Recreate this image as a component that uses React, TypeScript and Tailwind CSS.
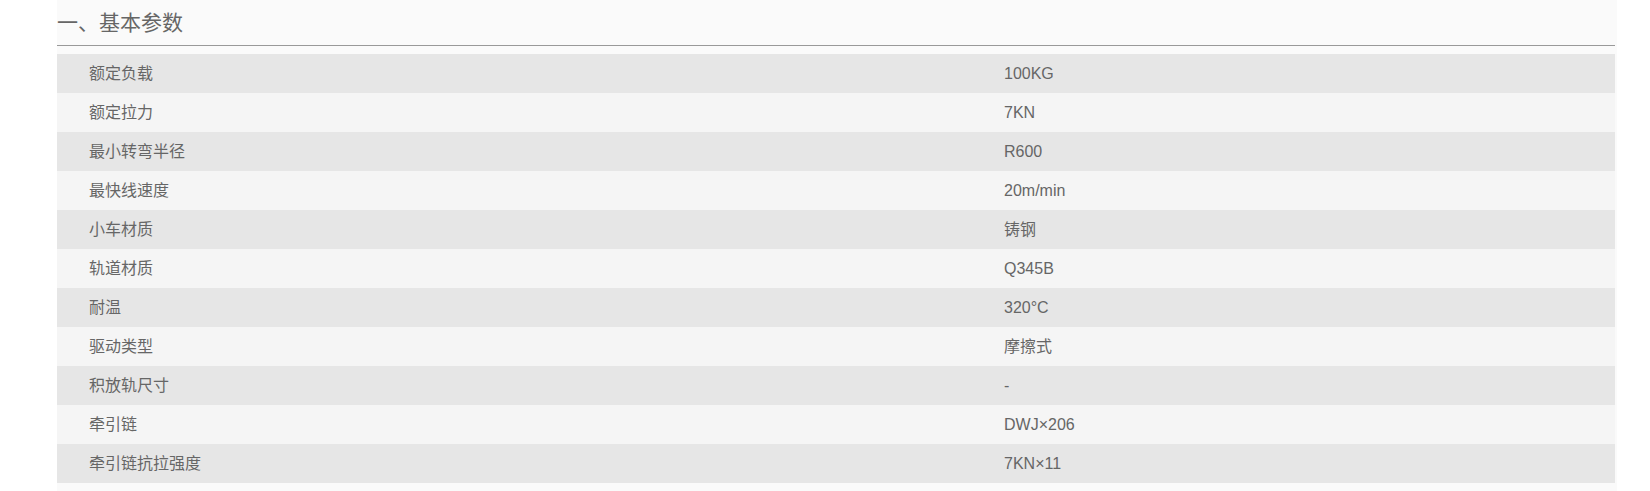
const rows: [string, string][] = [
  ['额定负载', '100KG'],
  ['额定拉力', '7KN'],
  ['最小转弯半径', 'R600'],
  ['最快线速度', '20m/min'],
  ['小车材质', '铸钢'],
  ['轨道材质', 'Q345B'],
  ['耐温', '320°C'],
  ['驱动类型', '摩擦式'],
  ['积放轨尺寸', '-'],
  ['牵引链', 'DWJ×206'],
  ['牵引链抗拉强度', '7KN×11'],
]

export default function App() {
  return (
    <div className="min-h-screen w-full bg-white">
      <div className="ml-[57px] w-[1560px] bg-[#fafafa] pb-[8px]">
        {/* Section title */}
        <div className="w-[1558px] h-[46px] border-b border-[#999999] flex items-center">
          <h2 className="text-[21px] leading-none text-[#666666] font-['Liberation_Serif','Noto_Sans_CJK_SC',serif] pt-[2px]">
            一、基本参数
          </h2>
        </div>

        {/* Parameter table */}
        <div className="mt-[8px] w-[1558px] font-['Liberation_Sans','Noto_Sans_CJK_SC',sans-serif] text-[16px] text-[#666666]">
          {rows.map(([label, value], i) => (
            <div
              key={label}
              className={`grid grid-cols-[947px_1fr] h-[39px] items-center ${
                i % 2 === 0 ? 'bg-[#e6e6e6]' : 'bg-[#f5f5f5]'
              }`}
            >
              <div className="pl-[32px]">{label}</div>
              <div>{value}</div>
            </div>
          ))}
        </div>
      </div>
    </div>
  )
}
